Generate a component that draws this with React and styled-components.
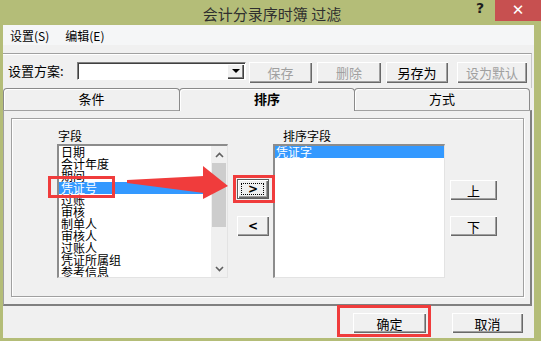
import React from "react";
import styled, { createGlobalStyle } from "styled-components";

const FONT = `"Noto Sans CJK SC", "Noto Sans", sans-serif`;

const GlobalStyle = createGlobalStyle`
  html, body { margin: 0; padding: 0; background: #fff; }
  body { font-family: ${FONT}; }
  * { box-sizing: border-box; }
`;

//window frame
const Window = styled.div`
  position: relative;
  width: 541px;
  height: 341px;
  padding: 0 7px 3px 3px;
  background: #b4bd78;
  display: flex;
  flex-direction: column;
  overflow: hidden;
  font-family: ${FONT};
  color: #000;
`;

const TitleBar = styled.div`
  height: 25px;
  flex: none;
  display: grid;
  grid-template-columns: 1fr auto 1fr;
  align-items: start;
`;

const Title = styled.div`
  grid-column: 2;
  padding-left: 7px;
  font-size: 15px;
  line-height: 27px;
  color: #2f2f2f;
  white-space: pre;
`;

const Controls = styled.div`
  grid-column: 3;
  justify-self: end;
  margin-right: -7px;
  display: flex;
`;

const HelpBtn = styled.div`
  width: 20px;
  height: 21px;
  margin-right: 5px;
  text-align: center;
  line-height: 23px;
  font: bold 14px "DejaVu Sans", sans-serif;
  color: #1e1e1e;
`;

const CloseBtn = styled.div`
  width: 46px;
  height: 21px;
  background: #c75050;
  color: #fff;
  text-align: center;
  font: bold 15px "DejaVu Sans", sans-serif;
  line-height: 21px;
`;

const Body = styled.div`
  flex: 1;
  background: #f0f0f0;
  display: flex;
  flex-direction: column;
`;

const MenuBar = styled.div`
  height: 20px;
  flex: none;
  background: #f5f6f7;
  display: flex;
  align-items: center;
  gap: 16px;
  padding-left: 7px;
  font-size: 12px;
`;

const Toolbar = styled.div`
  height: 35px;
  flex: none;
  margin: 8px 2px 0 0;
  border-top: 1px solid #a0a0a0;
  border-right: 1px solid #c8c8c8;
  box-shadow: inset 0 1px 0 #fff;
  display: flex;
  align-items: flex-start;
  padding: 8px 0 0 5px;
`;

const FieldLabel = styled.div`
  width: 69px;
  font-size: 13px;
  line-height: 18px;
`;

const Combo = styled.div`
  width: 169px;
  height: 18px;
  background: #fff;
  border-style: solid;
  border-width: 1px;
  border-color: #808080 #fff #fff #808080;
  box-shadow: inset 1px 1px 0 #404040;
  display: flex;
  justify-content: flex-end;
  padding: 1px 1px 0 0;
`;

const ComboArrow = styled.div`
  width: 17px;
  height: 15px;
  background: #f0f0f0;
  box-shadow: inset 1px 1px 0 #fff, inset -1px -1px 0 #404040,
    inset -2px -2px 0 #808080;
  display: flex;
  align-items: center;
  justify-content: center;
  &::before {
    content: "";
    border-left: 4px solid transparent;
    border-right: 4px solid transparent;
    border-top: 4px solid #000;
    margin-top: -1px;
  }
`;

const Button = styled.button`
  width: ${(p) => p.$w}px;
  height: ${(p) => p.$h || 20}px;
  margin-left: ${(p) => p.$ml || 0}px;
  margin-top: ${(p) => p.$mt || 0}px;
  padding: 0;
  flex: none;
  position: relative;
  border: ${(p) => (p.$default ? "1px solid #5c5c5c" : "none")};
  background: #f0f0f0;
  box-shadow: inset 1px 1px 0 #fff, inset -1px -1px 0 #696969,
    inset -2px -2px 0 #a0a0a0;
  font-family: ${FONT};
  font-size: 13px;
  line-height: 1;
  color: #000;
  &:disabled {
    color: #a0a0a0;
  }
  ${(p) =>
    p.$default &&
    `&::after {
      content: "";
      position: absolute;
      inset: 3px 4px 3px 3px;
      border: 1px dotted #000;
    }`}
`;

const ArrowGlyph = styled.span`
  font-family: "DejaVu Sans", sans-serif;
  font-size: 12px;
  font-weight: bold;
  position: relative;
  top: -1px;
`;

//tabs
const TabRow = styled.div`
  height: 22px;
  flex: none;
  display: flex;
  margin-right: 4px;
  position: relative;
  z-index: 1;
`;

const Tab = styled.div`
  width: ${(p) => p.$w}px;
  height: ${(p) => (p.$active ? 23 : 22)}px;
  margin-left: ${(p) => (p.$first ? 0 : -1)}px;
  border: 1px solid #8a8a8a;
  border-bottom: none;
  border-radius: 4px 4px 0 0;
  background: #f0f0f0;
  box-shadow: inset 1px 1px 0 #fff;
  text-align: center;
  font-size: 13px;
  line-height: 19px;
  font-weight: ${(p) => (p.$active ? 700 : 400)};
`;

const TabPanel = styled.div`
  width: 529px;
  height: 196px;
  flex: none;
  border-style: solid;
  border-width: 1px 2px 2px 1px;
  border-color: #a0a0a0 #808080 #808080 #a0a0a0;
  padding: 7px 0 0 7px;
`;

const Group = styled.div`
  width: 513px;
  height: 179px;
  border: 1px solid #a0a0a0;
  box-shadow: inset 1px 1px 0 #fff, 1px 1px 0 #fff;
  display: flex;
  align-items: flex-start;
  padding: 9px 0 0 45px;
`;

const Column = styled.div`
  width: ${(p) => p.$w}px;
  margin-left: ${(p) => p.$ml || 0}px;
  display: flex;
  flex-direction: column;
`;

const ListLabel = styled.div`
  height: 16px;
  padding-left: ${(p) => p.$pl || 1}px;
  font-size: 12px;
  line-height: 16px;
`;

const ListBox = styled.div`
  height: 134px;
  background: #fff;
  border-style: solid;
  border-width: 2px 1px 1px 2px;
  border-color: #8c8c8c #e3e3e3 #e3e3e3 #8c8c8c;
  display: flex;
  overflow: hidden;
`;

const Items = styled.div`
  flex: 1;
  display: flex;
  flex-direction: column;
`;

const Item = styled.div`
  height: 12px;
  flex: none;
  padding-left: ${(p) => p.$pl || 2}px;
  font-size: 12px;
  line-height: 12px;
  white-space: nowrap;
  background: ${(p) => (p.$selected ? "#3399ff" : "transparent")};
  color: ${(p) => (p.$selected ? "#fff" : "#000")};
`;

const ScrollBar = styled.div`
  width: 16px;
  display: flex;
  flex-direction: column;
  background: #f0f0f0;
`;

const ScrollArrow = styled.div`
  height: 17px;
  flex: none;
  display: flex;
  align-items: center;
  justify-content: center;
`;

const Thumb = styled.div`
  height: 64px;
  flex: none;
  margin: 0 1px;
  background: #cdcdcd;
`;

const Track = styled.div`
  flex: 1;
`;

const Footer = styled.div`
  flex: 1;
  display: flex;
  justify-content: flex-end;
  align-items: flex-start;
  gap: 26px;
  padding: 7px 11px 0 0;
`;

//red marks drawn over the screenshot
const Mark = styled.div`
  position: absolute;
  left: ${(p) => p.$x}px;
  top: ${(p) => p.$y}px;
  width: ${(p) => p.$w}px;
  height: ${(p) => p.$h}px;
  border: 3px solid #f03c3c;
  pointer-events: none;
`;

const ArrowSvg = styled.svg`
  position: absolute;
  left: 122px;
  top: 162px;
`;

const Chevron = ({ up }) => (
  <svg width="9" height="6" viewBox="0 0 9 6">
    <polyline
      points={up ? "1,5 4.5,1.5 8,5" : "1,1 4.5,4.5 8,1"}
      fill="none"
      stroke="#606060"
      strokeWidth="1.6"
    />
  </svg>
);

const fields = [
  "日期",
  "会计年度",
  "期间",
  "凭证号",
  "过账",
  "审核",
  "制单人",
  "审核人",
  "过账人",
  "凭证所属组",
  "参考信息",
];

const App = () => {
  return (
    <>
      <GlobalStyle />
      <Window>
        <TitleBar>
          <Title>会计分录序时簿 过滤</Title>
          <Controls>
            <HelpBtn>?</HelpBtn>
            <CloseBtn>✕</CloseBtn>
          </Controls>
        </TitleBar>
        <Body>
          <MenuBar>
            <span>设置(S)</span>
            <span>编辑(E)</span>
          </MenuBar>
          <Toolbar>
            <FieldLabel>设置方案:</FieldLabel>
            <Combo>
              <ComboArrow />
            </Combo>
            <Button $w={63} $h={21} $ml={3} disabled>
              保存
            </Button>
            <Button $w={64} $h={21} $ml={5} disabled>
              删除
            </Button>
            <Button $w={62} $h={21} $ml={5}>
              另存为
            </Button>
            <Button $w={70} $h={21} $ml={9} disabled>
              设为默认
            </Button>
          </Toolbar>
          <TabRow>
            <Tab $w={177} $first>
              条件
            </Tab>
            <Tab $w={176} $active>
              排序
            </Tab>
            <Tab $w={176}>方式</Tab>
          </TabRow>
          <TabPanel>
            <Group>
              <Column $w={171}>
                <ListLabel>字段</ListLabel>
                <ListBox>
                  <Items>
                    {fields.map((f) => (
                      <Item key={f} $selected={f === "凭证号"}>
                        {f}
                      </Item>
                    ))}
                  </Items>
                  <ScrollBar>
                    <ScrollArrow>
                      <Chevron up />
                    </ScrollArrow>
                    <Thumb />
                    <Track />
                    <ScrollArrow>
                      <Chevron />
                    </ScrollArrow>
                  </ScrollBar>
                </ListBox>
              </Column>
              <Column $w={32} $ml={9}>
                <Button $w={32} $mt={51} $default>
                  <ArrowGlyph>&gt;</ArrowGlyph>
                </Button>
                <Button $w={32} $mt={17}>
                  <ArrowGlyph>&lt;</ArrowGlyph>
                </Button>
              </Column>
              <Column $w={172} $ml={4}>
                <ListLabel $pl={10}>排序字段</ListLabel>
                <ListBox>
                  <Items>
                    <Item $selected $pl={1}>
                      凭证字
                    </Item>
                  </Items>
                </ListBox>
              </Column>
              <Column $w={47} $ml={5}>
                <Button $w={47} $mt={52}>
                  上
                </Button>
                <Button $w={47} $mt={16}>
                  下
                </Button>
              </Column>
            </Group>
          </TabPanel>
          <Footer>
            <Button $w={73}>确定</Button>
            <Button $w={71}>取消</Button>
          </Footer>
        </Body>

        <Mark $x={48} $y={176} $w={67} $h={22} />
        <ArrowSvg width="110" height="42" viewBox="0 0 110 42">
          <polygon points="5,18 82,14 82,31 5,21" fill="#f03c3c" />
          <polygon points="81,4 106,24 81,37" fill="#f03c3c" />
        </ArrowSvg>
        <Mark $x={233} $y={175} $w={42} $h={28} />
        <Mark $x={337} $y={305} $w={94} $h={32} />
      </Window>
    </>
  );
};

export default App;
